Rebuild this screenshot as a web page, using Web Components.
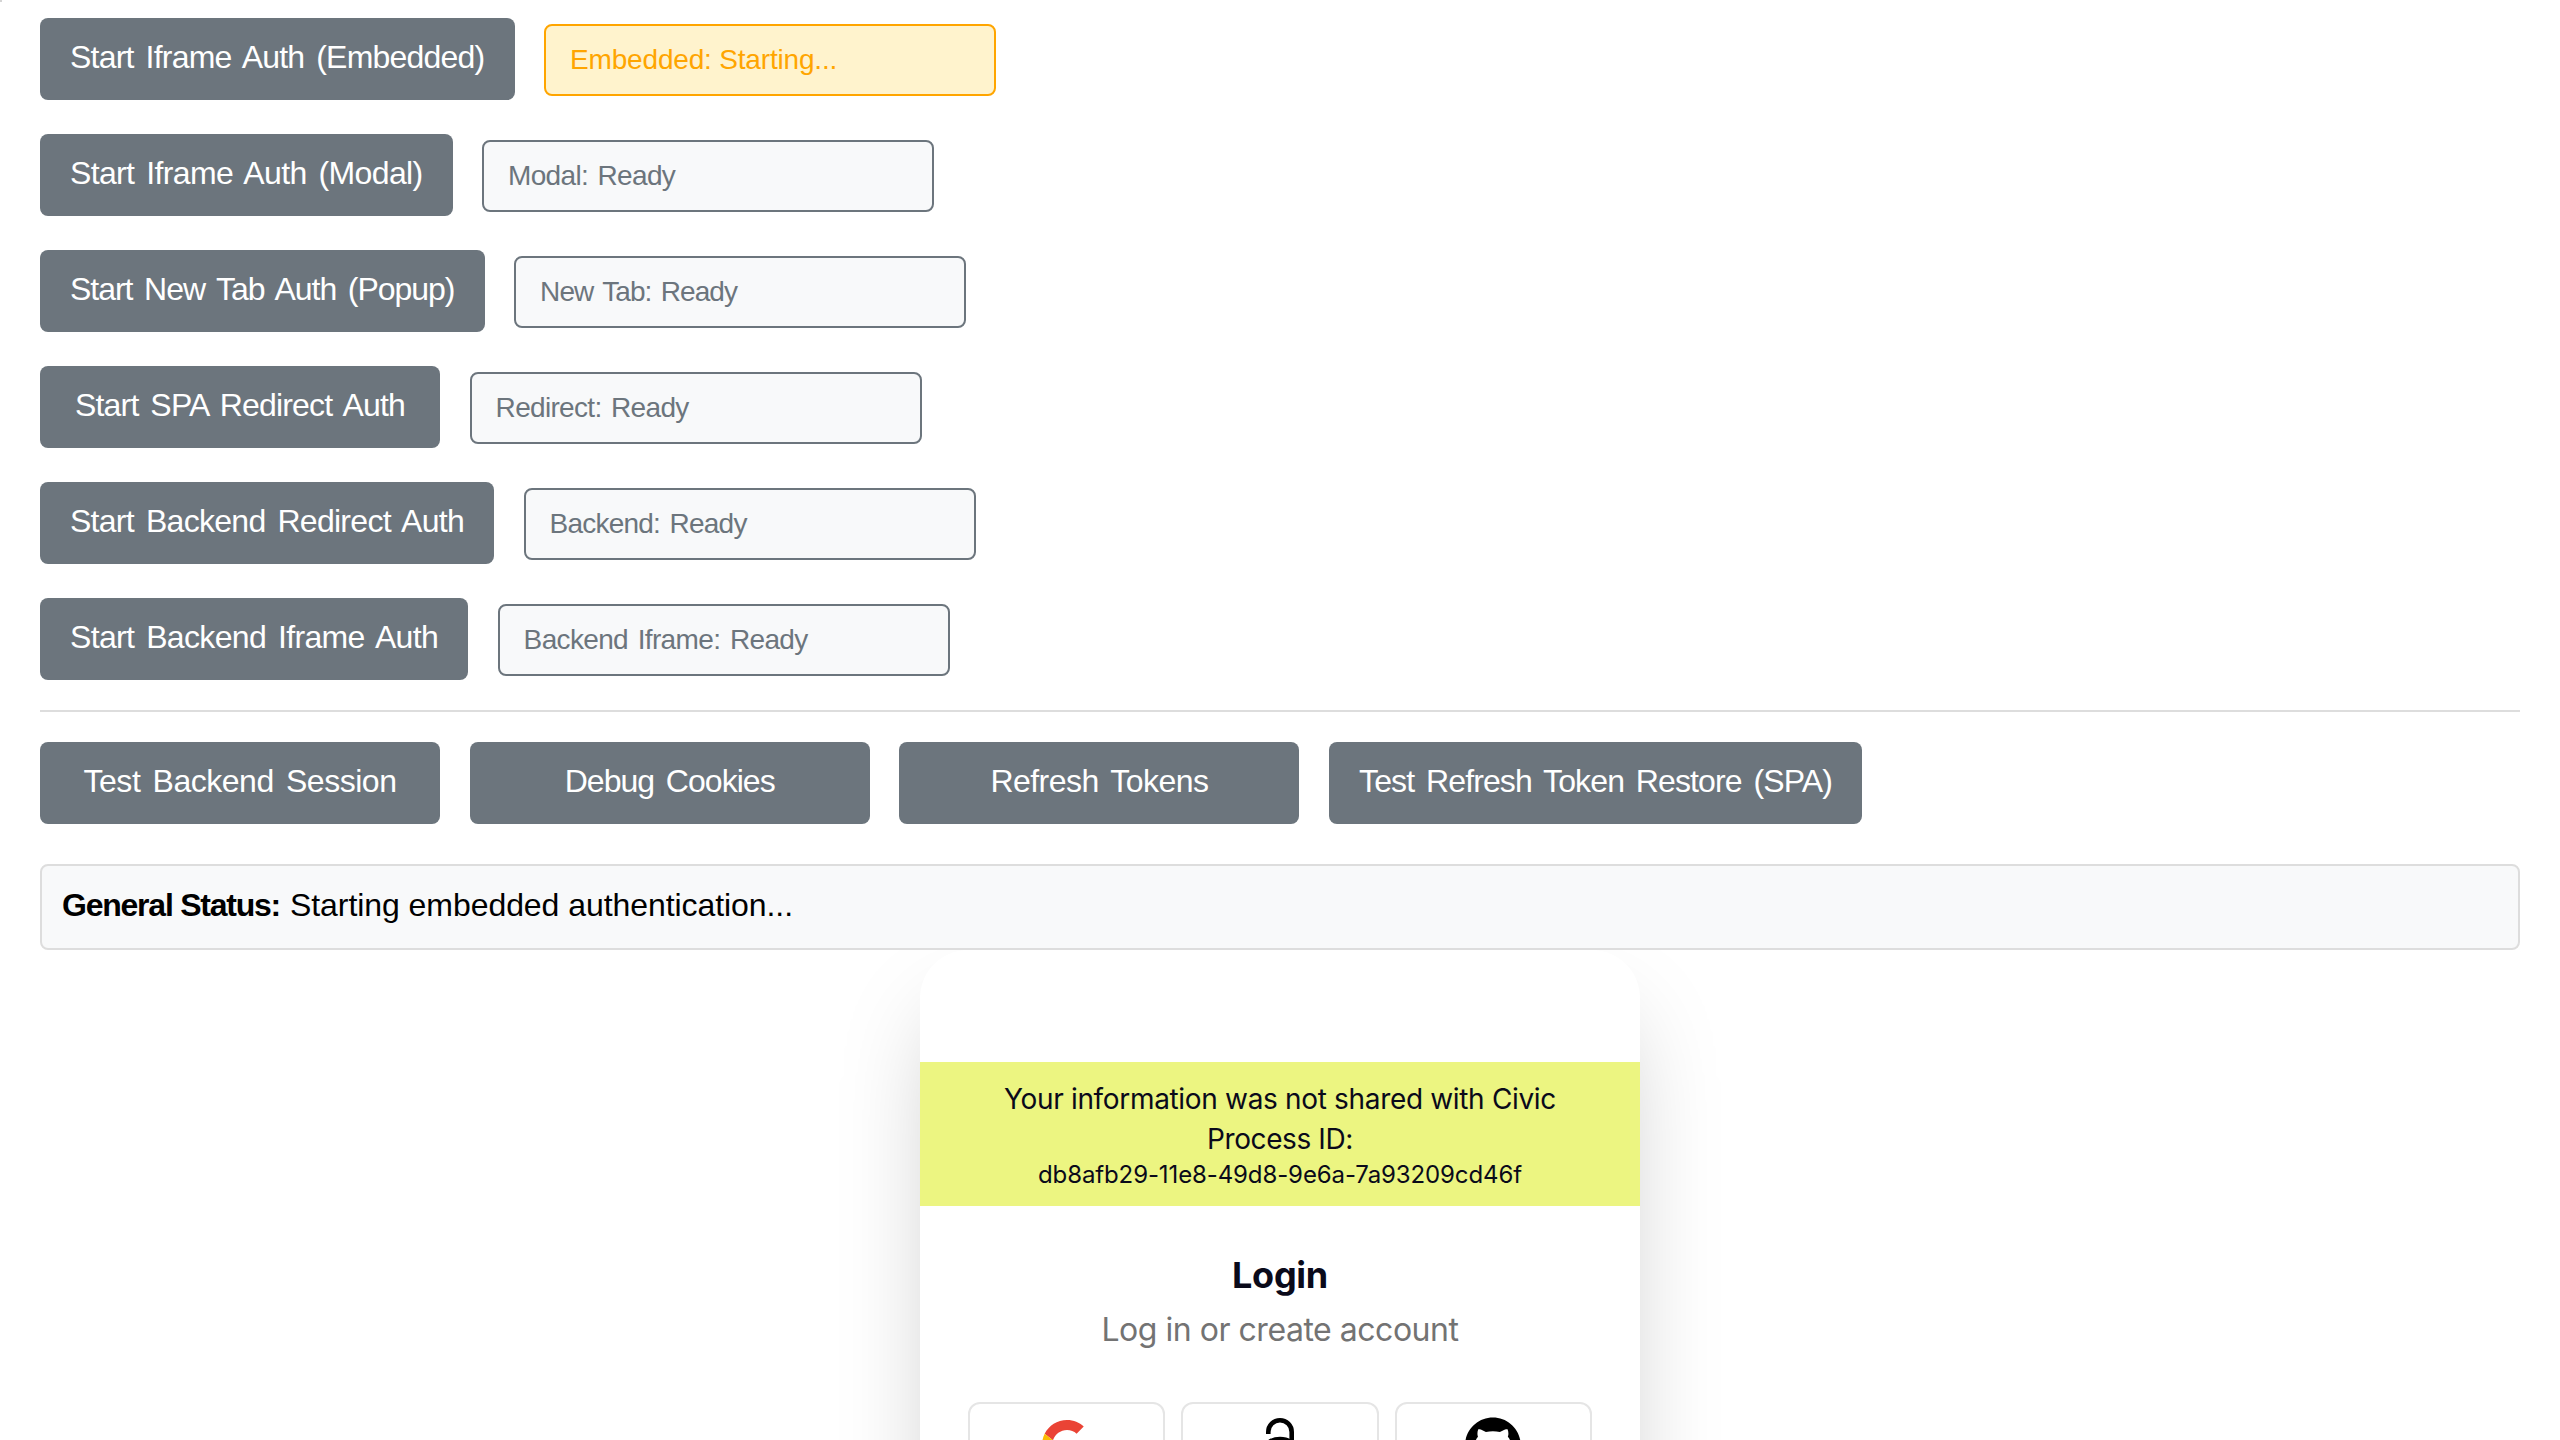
<!DOCTYPE html>
<html lang="en">
<head>
<meta charset="utf-8">
<title>Auth test</title>
<style>
html,body{margin:0;background:#fff;height:1440px;overflow:hidden}
body{font-family:"Liberation Sans",Arial,sans-serif;font-size:32px;color:#000}
</style>
</head>
<body>
<auth-page></auth-page>
<script>
const define = (name, html, init) => customElements.define(name, class extends HTMLElement {
  constructor() {
    super();
    this.attachShadow({ mode: 'open' }).innerHTML = html;
  }
  connectedCallback() { if (init) init.call(this); }
});

// Text run whose tracking is tuned to a given advance width
define('fit-text', `<style>:host{display:inline-block;white-space:pre}</style><slot></slot>`, function () {
  const n = this.textContent.length;
  const natural = this.getBoundingClientRect().width;
  const gap = (Number(this.getAttribute('w')) - natural) / n;
  this.style.letterSpacing = gap.toFixed(3) + 'px';
});

define('action-button', `<style>
:host{display:block}
button{display:block;box-sizing:border-box;height:82px;min-width:400px;padding:0 30px 4px;border:0;border-radius:8px;background:#6c757d;color:#fff;font:inherit;line-height:78px;text-align:center;white-space:nowrap;word-spacing:3.8px}
</style><button><slot></slot></button>`);

define('status-pill', `<style>
:host{display:flex;align-items:center;box-sizing:border-box;width:452px;height:72px;padding:0 24px 1px;border:2px solid #6c757d;border-radius:8px;background:#f8f9fa;color:#6c757d;font-size:28px;line-height:32px;word-spacing:2.5px}
:host([state=starting]){border-color:#ffa500;background:#fff3cd;color:#ffa500;word-spacing:0}
</style><slot></slot>`);

define('auth-row', `<style>
:host{display:flex;align-items:center;gap:29.6px;height:82px}
::slotted(status-pill){margin-top:2px}
</style><slot></slot>`);

define('general-status', `<style>
:host{display:flex;align-items:center;box-sizing:border-box;height:86px;padding:0 20px 4px;border:2px solid #ddd;border-radius:8px;background:#f8f9fa}
b{margin-right:10px}
</style><b><slot name="label"></slot></b><slot></slot>`);

define('provider-tile', `<style>
:host{display:flex;justify-content:center;box-sizing:border-box;flex:1;height:84px;padding-top:12px;border:2px solid #e5e5e5;border-radius:12px;background:#fff}
</style><slot></slot>`);

define('login-card', `<style>
:host{display:block;width:720px;height:900px;border-radius:48px;background:#fff;box-shadow:0 50px 100px -24px rgba(0,0,0,.25);font-family:Inter,sans-serif;color:#0a0a1a;text-align:center}
.banner{display:flex;flex-direction:column;align-items:center;box-sizing:border-box;height:144px;padding-top:17px;background:#ecf581;font-size:28px;line-height:40px}
.id{font-size:24px;line-height:32px}
.top{height:112px}
h1{margin:47px 0 0;font-size:36px;line-height:44px;font-weight:700}
p{margin:9px 0 0;font-size:32px;line-height:48px;color:#737373}
.tiles{display:flex;gap:16px;padding:0 48px;margin-top:48px}
svg{display:block;width:56px;height:56px}
svg.google{width:50px;height:50px;margin-top:4px}
svg.github{margin-top:1px}
</style>
<div class="top"></div>
<div class="banner"><fit-text w="552">Your information was not shared with Civic</fit-text><fit-text w="146">Process ID:</fit-text><fit-text class="id" w="484">db8afb29-11e8-49d8-9e6a-7a93209cd46f</fit-text></div>
<h1><fit-text w="96">Login</fit-text></h1>
<p><fit-text w="357">Log in or create account</fit-text></p>
<div class="tiles">
<provider-tile><svg class="google" viewBox="0 0 48 48"><path fill="#EA4335" d="M24 9.5c3.54 0 6.71 1.22 9.21 3.6l6.85-6.85C35.9 2.38 30.47 0 24 0 14.62 0 6.51 5.38 2.56 13.22l7.98 6.19C12.43 13.72 17.74 9.5 24 9.5z"/><path fill="#4285F4" d="M46.98 24.55c0-1.57-.15-3.09-.38-4.55H24v9.02h12.94c-.58 2.96-2.26 5.48-4.78 7.18l7.73 6c4.51-4.18 7.09-10.36 7.09-17.65z"/><path fill="#FBBC05" d="M10.53 28.59c-.48-1.45-.76-2.99-.76-4.59s.27-3.14.76-4.59l-7.98-6.19C.92 16.46 0 20.12 0 24c0 3.88.92 7.54 2.56 10.78l7.97-6.19z"/><path fill="#34A853" d="M24 48c6.48 0 11.93-2.13 15.89-5.81l-7.73-6c-2.15 1.45-4.92 2.3-8.16 2.3-6.26 0-11.57-4.22-13.47-9.91l-7.98 6.19C6.51 42.62 14.62 48 24 48z"/></svg></provider-tile>
<provider-tile><svg viewBox="0 0 56 56"><path fill="none" stroke="#000" stroke-width="4.6" d="M16.3 18V16a11.7 11.7 0 0 1 23.4 0V30"/><circle cx="28" cy="43" r="20" fill="none" stroke="#000" stroke-width="4.6"/></svg></provider-tile>
<provider-tile><svg class="github" viewBox="0 0 98 96"><path d="M48.854 0C21.839 0 0 22 0 49.217c0 21.756 13.993 40.172 33.405 46.69 2.427.49 3.316-1.059 3.316-2.362 0-1.141-.08-5.052-.08-9.127-13.59 2.934-16.42-5.867-16.42-5.867-2.184-5.704-5.42-7.17-5.42-7.17-4.448-3.015.324-3.015.324-3.015 4.934.326 7.523 5.052 7.523 5.052 4.367 7.496 11.404 5.378 14.235 4.074.404-3.178 1.699-5.378 3.074-6.6-10.839-1.141-22.243-5.378-22.243-24.283 0-5.378 1.94-9.778 5.014-13.2-.485-1.222-2.184-6.275.486-13.038 0 0 4.125-1.304 13.426 5.052a46.97 46.97 0 0 1 12.214-1.63c4.125 0 8.33.571 12.213 1.63 9.302-6.356 13.427-5.052 13.427-5.052 2.67 6.763.97 11.816.485 13.038 3.155 3.422 5.015 7.822 5.015 13.2 0 18.905-11.404 23.06-22.324 24.283 1.78 1.548 3.316 4.481 3.316 9.126 0 6.6-.08 11.897-.08 13.526 0 1.304.89 2.853 3.316 2.364 19.412-6.52 33.405-24.935 33.405-46.691C97.707 22 75.788 0 48.854 0z"/></svg></provider-tile>
</div>`);

define('auth-page', `<style>
:host{display:flex;flex-direction:column;box-sizing:border-box;width:2560px;height:1440px;padding:18px 40px 0;overflow:hidden;background:linear-gradient(#d4d4d4,#d4d4d4) 0 0/2px 2px no-repeat}
.rows{display:flex;flex-direction:column;gap:34px}
hr{width:100%;height:2px;margin:30px 0;border:0;background:#ddd;flex:none}
.actions{display:flex;gap:29.7px;margin-bottom:40px}
.stage{display:flex;justify-content:center;flex:1;min-height:0;overflow:hidden}
general-status{flex:none}
</style>
<div class="rows">
<auth-row><action-button><fit-text w="414.5">Start Iframe Auth (Embedded)</fit-text></action-button><status-pill state="starting"><fit-text w="267">Embedded: Starting...</fit-text></status-pill></auth-row>
<auth-row><action-button><fit-text w="352.5">Start Iframe Auth (Modal)</fit-text></action-button><status-pill><fit-text w="167">Modal: Ready</fit-text></status-pill></auth-row>
<auth-row><action-button><fit-text w="384.5">Start New Tab Auth (Popup)</fit-text></action-button><status-pill><fit-text w="197">New Tab: Ready</fit-text></status-pill></auth-row>
<auth-row><action-button><fit-text w="330">Start SPA Redirect Auth</fit-text></action-button><status-pill><fit-text w="193">Redirect: Ready</fit-text></status-pill></auth-row>
<auth-row><action-button><fit-text w="394">Start Backend Redirect Auth</fit-text></action-button><status-pill><fit-text w="197">Backend: Ready</fit-text></status-pill></auth-row>
<auth-row><action-button><fit-text w="368">Start Backend Iframe Auth</fit-text></action-button><status-pill><fit-text w="284">Backend Iframe: Ready</fit-text></status-pill></auth-row>
</div>
<hr>
<div class="actions">
<action-button><fit-text w="313">Test Backend Session</fit-text></action-button>
<action-button><fit-text w="210">Debug Cookies</fit-text></action-button>
<action-button><fit-text w="218">Refresh Tokens</fit-text></action-button>
<action-button><fit-text w="473">Test Refresh Token Restore (SPA)</fit-text></action-button>
</div>
<general-status><fit-text slot="label" w="218">General Status:</fit-text><fit-text w="503">Starting embedded authentication...</fit-text></general-status>
<div class="stage"><login-card></login-card></div>`);
</script>
</body>
</html>
